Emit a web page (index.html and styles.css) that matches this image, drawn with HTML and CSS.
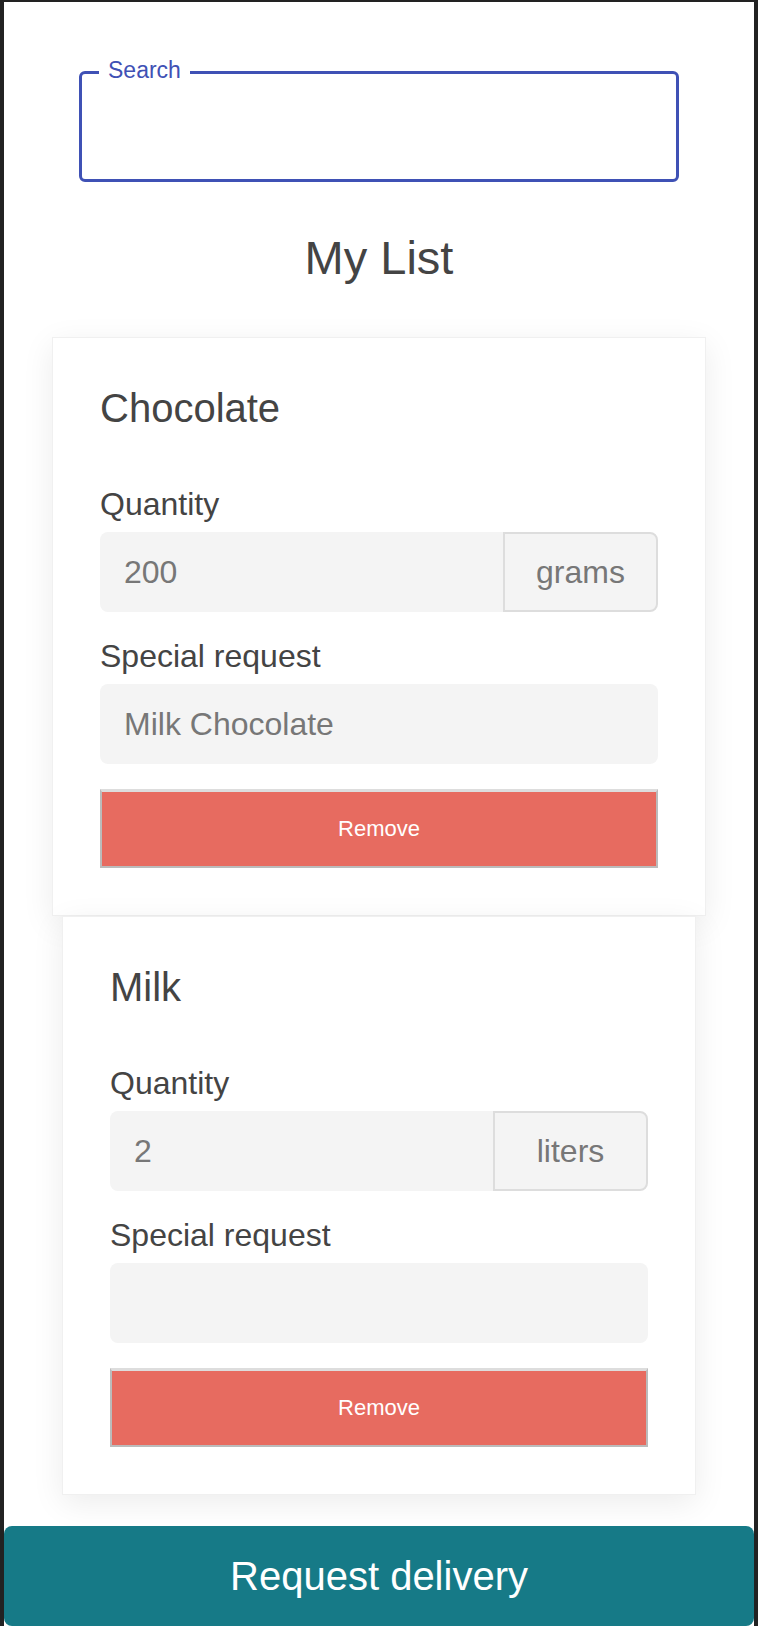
FILE: index.html
```html
<!DOCTYPE html>
<html lang="en">
<head>
    <meta charset="UTF-8">
    <title>My List</title>
    <link rel="stylesheet" href="styles.css">
</head>
<body>
    <div class="page">
        <fieldset class="search">
            <legend>Search</legend>
            <input type="text" class="search-input">
        </fieldset>

        <h1>My List</h1>

        <div class="card">
            <h2>Chocolate</h2>
            <label class="field-label">Quantity</label>
            <div class="input-group">
                <input type="text" class="field-input" value="200">
                <span class="unit">grams</span>
            </div>
            <label class="field-label">Special request</label>
            <input type="text" class="field-input" value="Milk Chocolate">
            <button class="remove">Remove</button>
        </div>

        <div class="card card-narrow">
            <h2>Milk</h2>
            <label class="field-label">Quantity</label>
            <div class="input-group">
                <input type="text" class="field-input" value="2">
                <span class="unit">liters</span>
            </div>
            <label class="field-label">Special request</label>
            <input type="text" class="field-input" value="">
            <button class="remove">Remove</button>
        </div>

        <button class="deliver">Request delivery</button>
    </div>
</body>
</html>
```

FILE: styles.css
```css
html {
    background-color: #222;
}
body {
    margin: 0;
    padding: 2px 4px 0 4px;
    font-family: "Liberation Sans", Arial, Helvetica, sans-serif;
    color: #444;
}
.page {
    background-color: #fff;
    padding-top: 54px;
}

/* outlined search field */
.search {
    box-sizing: border-box;
    width: 600px;
    margin: 0 auto;
    padding: 0 17px;
    border: 3px solid #3f51b5;
    border-radius: 6px;
}
.search legend {
    padding: 0 9px 4px;
    font-size: 23px;
    line-height: 28px;
    color: #3f51b5;
}
.search-input {
    display: block;
    box-sizing: border-box;
    width: 100%;
    height: 91px;
    border: 0;
    outline: 0;
    background-color: transparent;
    font: inherit;
    font-size: 32px;
}

h1 {
    margin: 49px 0 52px;
    font-size: 47px;
    font-weight: normal;
    line-height: 54px;
    text-align: center;
}

/* item cards */
.card {
    box-sizing: border-box;
    display: flex;
    flex-direction: column;
    width: 654px;
    margin: 0 auto;
    padding: 47px;
    background-color: #fff;
    border: 1px solid #f0f0f0;
    box-shadow: 0 8px 30px rgba(0, 0, 0, 0.08);
}
.card-narrow {
    width: 634px;
}
.card h2 {
    margin: 0 0 29px;
    font-size: 40px;
    font-weight: normal;
    line-height: 46px;
}
.field-label {
    display: block;
    margin: 26px 0 9px;
    font-size: 32px;
    line-height: 37px;
}
.field-input {
    box-sizing: border-box;
    width: 100%;
    height: 80px;
    padding: 0 24px;
    border: 0;
    outline: 0;
    border-radius: 8px;
    background-color: #f4f4f4;
    font: inherit;
    font-size: 32px;
    color: #777;
}
.input-group {
    display: flex;
}
.input-group .field-input {
    flex: 1;
    min-width: 0;
    border-radius: 8px 0 0 8px;
}
.unit {
    box-sizing: border-box;
    display: flex;
    align-items: center;
    justify-content: center;
    width: 155px;
    border: 2px solid #ddd;
    border-radius: 0 8px 8px 0;
    background-color: #f4f4f4;
    color: #777;
    font-size: 32px;
}
.remove {
    display: block;
    box-sizing: border-box;
    width: 100%;
    height: 79px;
    margin-top: 25px;
    border: 2px solid #bbb;
    border-top: 3px solid #ddd;
    background-color: #e76b60;
    color: #fff;
    font: inherit;
    font-size: 22px;
}

.deliver {
    display: block;
    width: 100%;
    height: 100px;
    margin-top: 31px;
    border: 0;
    border-radius: 8px;
    background-color: #167a87;
    color: #fff;
    font: inherit;
    font-size: 40px;
}
```
